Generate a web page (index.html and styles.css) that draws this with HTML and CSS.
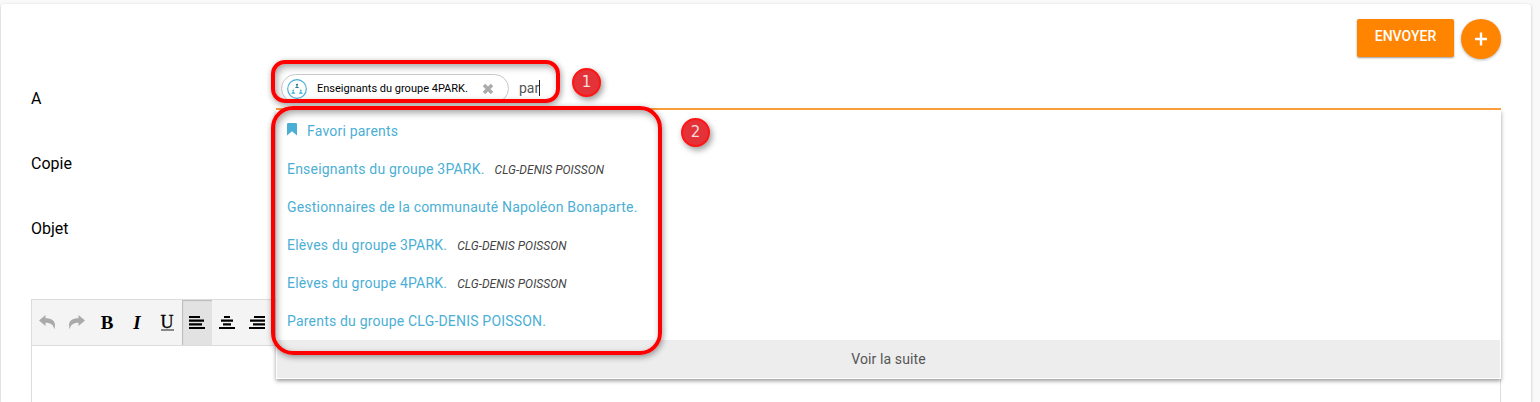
FILE: index.html
```html
<!DOCTYPE html>
<html lang="fr">
<head>
<meta charset="utf-8">
<title>Nouveau message</title>
<link rel="stylesheet" href="styles.css">
</head>
<body>
<main class="card">
  <div class="actions">
    <button class="send">ENVOYER</button>
    <button class="more" aria-label="Plus"><svg width="12" height="14" viewBox="0 0 12 14"><path d="M6 .5v13M0 7h12" stroke="#fff" stroke-width="2.400"/></svg></button>
  </div>
  <div class="row">
    <label class="label">A</label>
    <div class="field">
      <div class="chip">
        <svg class="avatar" width="20" height="20" viewBox="0 0 20 20"><circle cx="10" cy="10" r="9.300" fill="#fff" stroke="#4bafd5" stroke-width="1.200"/><circle cx="10" cy="5.800" r="1.100" fill="#28788f"/><path d="M8 9q2-3.500 4 0z" fill="#28788f"/><path d="M7.300 9.500l-1 1.300M12.700 9.500l1 1.300" stroke="#9bcbd9" stroke-width=".7"/><circle cx="6.200" cy="11.700" r="1" fill="#59bdd5"/><circle cx="13.800" cy="11.700" r="1" fill="#59bdd5"/><path d="M4 14.700q2.200-4 4.400 0zM11.600 14.700q2.200-4 4.400 0z" fill="#40b5d6"/></svg>
        <span class="chip-text">Enseignants du groupe 4PARK.</span>
        <svg class="remove" width="12" height="12" viewBox="0 0 12 12"><path d="M2 2l8 8M10 2l-8 8" stroke="#aaa" stroke-width="3.500"/></svg>
      </div>
      <span class="typed">par</span><span class="caret"></span>
      <div class="dropdown">
        <ul class="options">
          <li class="option"><svg class="bookmark" width="10" height="13" viewBox="0 0 10 13"><path d="M0 1.200Q0 0 1.200 0h7.600Q10 0 10 1.200V12.500L5 8.200 0 12.500z" fill="#4bafd5"/></svg>Favori parents</li>
          <li class="option">Enseignants du groupe 3PARK.<em class="school">CLG-DENIS POISSON</em></li>
          <li class="option">Gestionnaires de la communauté Napoléon Bonaparte.</li>
          <li class="option">Elèves du groupe 3PARK.<em class="school">CLG-DENIS POISSON</em></li>
          <li class="option">Elèves du groupe 4PARK.<em class="school">CLG-DENIS POISSON</em></li>
          <li class="option">Parents du groupe CLG-DENIS POISSON.</li>
        </ul>
        <div class="see-more">Voir la suite</div>
      </div>
    </div>
  </div>
  <div class="row"><label class="label">Copie</label></div>
  <div class="row"><label class="label">Objet</label></div>
  <section class="editor">
    <div class="toolbar">
      <span class="tool"><svg width="17" height="15" viewBox="0 0 17 15"><path d="M0 5.500L6.500 0v3.300c6 0 9.500 2.700 9.500 6.700 0 1.500-.3 3-.8 4.500C14.500 10 12 7.800 6.500 7.800V11z" fill="#aaa"/></svg></span>
      <span class="tool"><svg width="17" height="15" viewBox="0 0 17 15"><path d="M16 5.500L9.500 0v3.300C3.500 3.300 0 6 0 10c0 1.500.3 3 .8 4.500C1.500 10 4 7.800 9.500 7.800V11z" fill="#aaa"/></svg></span>
      <span class="tool letter bold">B</span>
      <span class="tool letter italic">I</span>
      <span class="tool letter"><span class="under">U</span></span>
      <span class="tool active"><svg width="16" height="14" viewBox="0 0 16 14"><path d="M0 1h11M0 4.700h15M0 8.400h13M0 12h16" stroke="#000" stroke-width="2.200"/></svg></span>
      <span class="tool"><svg width="16" height="14" viewBox="0 0 16 14"><path d="M5 1h6M2 4.700h12M4 8.400h8M0 12h16" stroke="#000" stroke-width="2.200"/></svg></span>
      <span class="tool"><svg width="16" height="14" viewBox="0 0 16 14"><path d="M5 1h11M1 4.700h15M4 8.400h12M0 12h16" stroke="#000" stroke-width="2.200"/></svg></span>
    </div>
  </section>
</main>
<div class="outline outline-one"></div>
<div class="outline outline-two"></div>
<div class="marker marker-one">1</div>
<div class="marker marker-two">2</div>
</body>
</html>
```

FILE: styles.css
```css
* { box-sizing: border-box; }
body {
  margin: 0;
  height: 402px;
  overflow: hidden;
  padding: 4px 9px 0 1px;
  background: #f9f9f9;
  font-family: Roboto, "Liberation Sans", sans-serif;
  color: #000;
}
.card {
  display: flex;
  flex-direction: column;
  height: 398px;
  padding: 15px 30px 0;
  background: #fff;
  border-radius: 3px 3px 0 0;
  box-shadow: 0 1px 3px rgba(0, 0, 0, .25);
}
.actions { display: flex; flex: none; justify-content: flex-end; gap: 7px; height: 47px; }
.send {
  width: 97px;
  height: 38px;
  padding: 0 0 4px;
  border: 0;
  border-radius: 2px;
  background: #ff8500;
  color: #fff;
  font: 500 14px Roboto, sans-serif;
  box-shadow: 0 1px 2px rgba(0, 0, 0, .4);
}
.more {
  display: flex;
  align-items: center;
  justify-content: center;
  width: 40px;
  height: 40px;
  padding: 0;
  border: 0;
  border-radius: 50%;
  background: #ff8500;
  box-shadow: 0 1px 3px rgba(0, 0, 0, .3);
}
.row { display: flex; flex: none; height: 65px; }
.label { width: 245px; padding-top: 23px; font-size: 16px; line-height: 19px; }
.field {
  position: relative;
  display: flex;
  align-items: flex-start;
  flex: 1;
  height: 44px;
  padding: 8px 0 0 5px;
  border-bottom: 2px solid #fb9d38;
}
.chip {
  display: flex;
  align-items: center;
  width: 228px;
  height: 29px;
  padding: 0 14px 0 5px;
  border: 1px solid #c8c8c8;
  border-radius: 15px;
  font-size: 11px;
}
.chip-text { margin: 0 auto 0 10px; white-space: nowrap; }
.typed { margin-left: 10px; font-size: 14px; line-height: 28px; color: #555; }
.caret { width: 1px; height: 16px; margin-top: 6px; background: #222; }
.dropdown {
  position: absolute;
  z-index: 1;
  top: 44px;
  left: 0;
  right: 0;
  padding: 2px 1px 1px;
  background: #fff;
  box-shadow: 0 2px 4px rgba(0, 0, 0, .4);
  clip-path: inset(0 -6px -8px -6px);
}
.options { margin: 0; padding: 0; list-style: none; }
.option {
  display: flex;
  align-items: center;
  height: 38px;
  padding-left: 10px;
  font-size: 14px;
  letter-spacing: .2px;
  color: #4bafd5;
}
.bookmark { margin: 0 10px 3px 0; }
.school { margin: 1px 0 0 10px; font-size: 12px; letter-spacing: .04px; color: #444; }
.see-more {
  height: 38px;
  line-height: 38px;
  background: #ededed;
  color: #555;
  font-size: 14px;
  letter-spacing: .12px;
  text-align: center;
}
.editor { flex: 1; margin-top: 38px; border: 1px solid #dcdcdc; border-bottom: 0; }
.toolbar { display: flex; height: 46px; background: #f4f4f4; border-bottom: 1px solid #dcdcdc; }
.tool { display: flex; align-items: center; justify-content: center; width: 30px; height: 45px; }
.letter { font: 19px/1 "Liberation Serif", serif; }
.bold { font-weight: bold; }
.italic { font-style: italic; font-weight: bold; }
.under { height: 16px; margin-top: 1px; line-height: 15px; font-size: 18px; border-bottom: 2px solid #888; -webkit-text-stroke: .3px #000; }
.active { background: #e2e2e2; box-shadow: inset 1px 1px 1px #bbb; }
.outline {
  position: absolute;
  z-index: 2;
  border: 4px solid #f00;
  box-shadow: 1px 2px 6px rgba(0, 0, 0, .4), inset 2px 3px 7px rgba(0, 0, 0, .35);
}
.outline-one { left: 271px; top: 60px; width: 289px; height: 43px; border-radius: 14px; }
.outline-two { left: 271px; top: 106px; width: 391px; height: 249px; border-radius: 22px; }
.marker {
  position: absolute;
  z-index: 3;
  width: 29px;
  height: 29px;
  border: 2px solid #ff1515;
  border-radius: 50%;
  background: #e33338;
  color: #f4dede;
  font: 15px/25px "DejaVu Sans", sans-serif;
  text-align: center;
  box-shadow: 2px 3px 6px rgba(0, 0, 0, .4);
}
.marker-one { left: 572px; top: 68px; }
.marker-two { left: 681px; top: 118px; }
```
